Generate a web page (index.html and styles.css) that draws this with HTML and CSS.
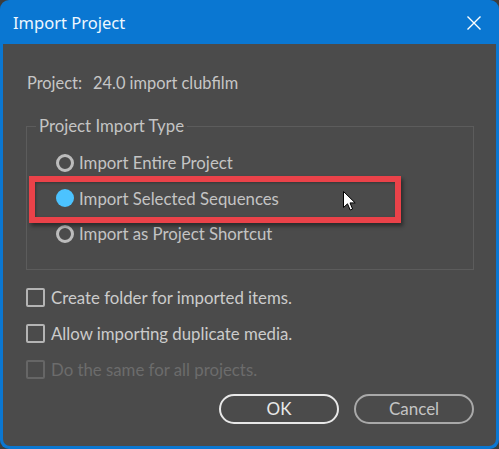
FILE: index.html
```html
<!DOCTYPE html>
<html>
<head>
<meta charset="utf-8">
<link rel="stylesheet" href="styles.css">
</head>
<body>
<div class="window">
  <div class="titlebar">
    <span class="title">Import Project</span>
    <svg class="close" width="16" height="16" viewBox="0 0 16 16"><path d="M1.5 1.5 L14.5 14.5 M14.5 1.5 L1.5 14.5" stroke="#ffffff" stroke-width="1.4" fill="none"/></svg>
  </div>
  <div class="content">
    <div class="project-line"><span>Project:</span><span class="project-name">24.0 import clubfilm</span></div>
    <fieldset class="group">
      <legend>Project Import Type</legend>
      <div class="radio-row"><span class="radio"></span><span>Import Entire Project</span></div>
      <div class="radio-row"><span class="radio checked"></span><span>Import Selected Sequences</span></div>
      <div class="radio-row"><span class="radio"></span><span>Import as Project Shortcut</span></div>
    </fieldset>
    <div class="checks">
      <div class="check-row"><span class="box"></span><span>Create folder for imported items.</span></div>
      <div class="check-row"><span class="box"></span><span>Allow importing duplicate media.</span></div>
      <div class="check-row disabled"><span class="box"></span><span>Do the same for all projects.</span></div>
    </div>
    <div class="buttons">
      <button class="btn primary">OK</button>
      <button class="btn">Cancel</button>
    </div>
    <div class="highlight"></div>
    <svg class="cursor" width="14" height="22" viewBox="0 0 14 22"><path d="M0.5 0.5 L0.5 16.5 L4.5 12.8 L7.2 19 L9.6 18 L7 11.9 L12.2 11.9 Z" fill="#ffffff" stroke="#000000" stroke-width="1" stroke-linejoin="round"/></svg>
  </div>
</div>
</body>
</html>
```
FILE: styles.css
```css
html, body {
  margin: 0;
  padding: 0;
  background: #3d3d3d;
}
.window {
  width: 499px;
  height: 449px;
  box-sizing: border-box;
  background: #0a77d2;
  border-radius: 9px;
  padding: 0 3px 3px 3px;
  display: flex;
  flex-direction: column;
  font-family: Lato, "Noto Sans", sans-serif;
}
.titlebar {
  height: 44px;
  flex: none;
  display: flex;
  align-items: center;
  justify-content: space-between;
  padding: 0 14px 0 10px;
}
.title {
  color: #eef7ff;
  font-family: "Noto Sans", sans-serif;
  font-size: 16.5px;
  margin-top: 1px;
}
.close {
  margin-top: 1px;
}
.content {
  flex: 1;
  background: #4b4b4b;
  border-radius: 0 0 7px 7px;
  padding: 29px 22px 0 23px;
  position: relative;
  color: #c4c4c4;
  font-size: 16.8px;
}
.project-line {
  line-height: 20px;
  padding-left: 1px;
  color: #c6c6c6;
  font-size: 16.4px;
}
.project-name {
  margin-left: 11px;
}
.group {
  margin: 23px 0 0 0;
  border: 1px solid #5c5c5c;
  padding: 9px 0 17px 29px;
}
.group legend {
  padding: 0 3px;
  margin-left: -20px;
  line-height: 20px;
  color: #c4c4c4;
}
.radio-row {
  height: 35.5px;
  display: flex;
  align-items: center;
  gap: 5px;
}
.radio {
  width: 18px;
  height: 18px;
  box-sizing: border-box;
  border: 3px solid #bcbcbc;
  border-radius: 50%;
}
.radio.checked {
  border: none;
  background: #4cc3ff;
}
.checks {
  margin-top: 10px;
}
.check-row {
  height: 36px;
  display: flex;
  align-items: center;
  gap: 6px;
  color: #cccccc;
}
.box {
  width: 19px;
  height: 19px;
  box-sizing: border-box;
  border: 2px solid #b4b4b4;
  border-radius: 2px;
}
.check-row.disabled {
  color: #6c6c6c;
}
.check-row.disabled .box {
  border-color: #666666;
}
.buttons {
  margin-top: 6px;
  display: flex;
  justify-content: flex-end;
  gap: 15px;
}
.btn {
  width: 120px;
  height: 30px;
  box-sizing: border-box;
  border-radius: 15px;
  background: transparent;
  border: 2px solid #a9a9a9;
  color: #c4c4c4;
  font-family: Lato, "Noto Sans", sans-serif;
  font-size: 17px;
  padding: 0;
}
.btn.primary {
  border-color: #e8e8e8;
  color: #e8e8e8;
}
.highlight {
  position: absolute;
  left: 26px;
  top: 132px;
  width: 372px;
  height: 47px;
  box-sizing: border-box;
  border: 6px solid #ea4249;
  box-shadow: 2px 3px 4px rgba(0, 0, 0, 0.45), inset 1px 1px 3px rgba(0, 0, 0, 0.3);
}
.cursor {
  position: absolute;
  left: 340px;
  top: 147px;
}
```
